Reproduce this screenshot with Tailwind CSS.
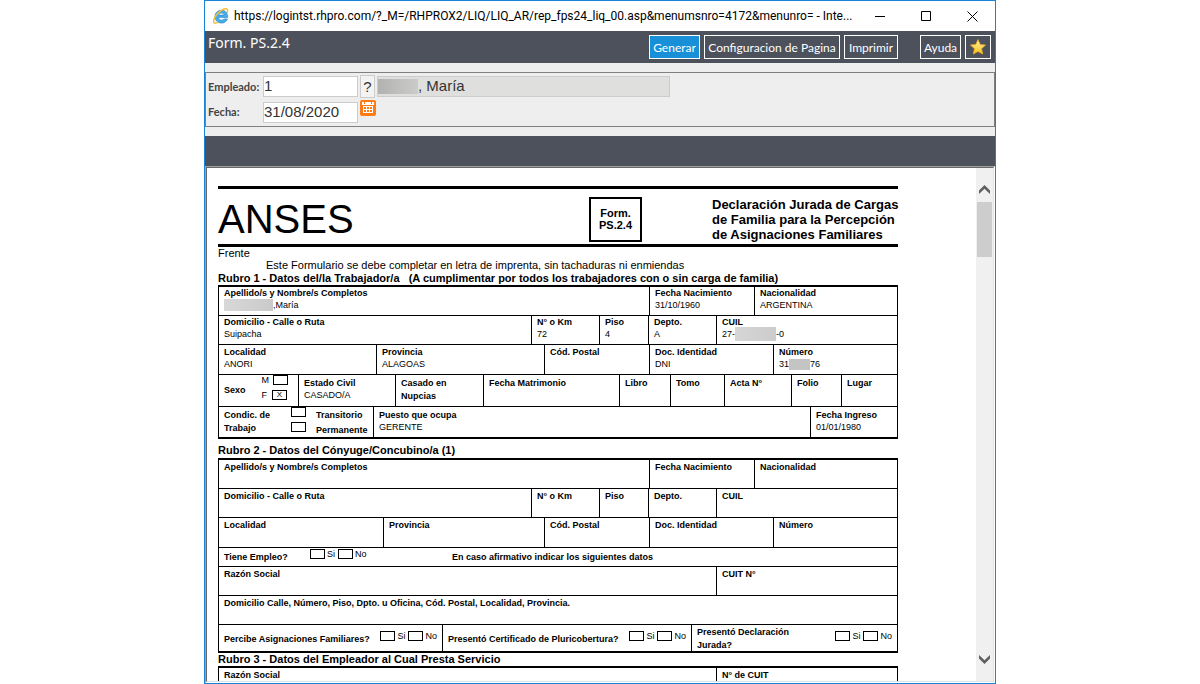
<!DOCTYPE html>
<html lang="es">
<head>
<meta charset="utf-8">
<meta name="viewport" content="width=device-width, initial-scale=1">
<title>Form. PS.2.4</title>
<script src="https://cdn.jsdelivr.net/npm/@tailwindcss/browser@4"></script>
</head>
<body class="bg-white">
<div class="mx-auto flex h-screen w-full max-w-[792px] flex-col overflow-hidden border border-[#1883d7] bg-white">

  <!-- Title bar -->
  <header class="flex h-[30px] shrink-0 items-center pl-2 font-['Roboto',sans-serif] text-xs text-black">
    <svg class="mr-[5px] size-4 shrink-0" viewBox="0 0 16 16" aria-hidden="true">
      <path d="M14.800 9.400H5.400c.2 1.600 1.500 2.600 3.200 2.600 1.100 0 2-.4 2.500-1.100h3.400c-.9 2.500-3.100 4.200-6 4.200C4.700 15.100 1.900 12.400 1.900 8.600c0-3.700 2.800-6.400 6.600-6.400 4 0 6.500 2.900 6.300 7.200zM5.600 7.100h5.500c-.2-1.300-1.200-2-2.700-2-1.500 0-2.500.7-2.800 2z" fill="#45aee8" stroke="#2a80c4" stroke-width=".6"/>
      <path d="M14.200 4.600c.7-1.900.5-3.200-.5-3.700C12 0 7.800 2.100 4.400 5.800 1 9.600-.3 13.400 1.100 14.700c.8.7 2.300.4 4.100-.6" fill="none" stroke="#f3c23a" stroke-width="1.600"/>
    </svg>
    <h1 class="min-w-0 flex-1 whitespace-nowrap">https://logintst.rhpro.com/?_M=/RHPROX2/LIQ/LIQ_AR/rep_fps24_liq_00.asp&amp;menumsnro=4172&amp;menunro= - Inte...</h1>
    <button type="button" aria-label="Minimizar" class="grid h-full w-[46px] shrink-0 place-items-center"><svg class="size-[11px]" viewBox="0 0 11 11"><path d="M0 5.500h10" stroke="#000"/></svg></button>
    <button type="button" aria-label="Maximizar" class="grid h-full w-[46px] shrink-0 place-items-center"><svg class="size-[11px]" viewBox="0 0 11 11"><path d="M.5.5h9v9h-9z" fill="none" stroke="#000"/></svg></button>
    <button type="button" aria-label="Cerrar" class="grid h-full w-[46px] shrink-0 place-items-center"><svg class="size-[11px]" viewBox="0 0 11 11"><path d="M.5.500l10 10m0-10l-10 10" stroke="#000"/></svg></button>
  </header>

  <!-- Toolbar -->
  <div class="flex h-8 shrink-0 items-start justify-between bg-[#4d515c] pl-[3px] pr-1 text-white">
    <h2 class="pt-[2px] font-['Noto_Sans',sans-serif] text-sm leading-5">Form. PS.2.4</h2>
    <div class="flex gap-1 pt-1 font-['Lato',sans-serif] text-xs">
      <button type="button" class="h-6 w-[51px] border border-white bg-[#1890d7] pt-px">Generar</button>
      <button type="button" class="h-6 w-[136px] border border-white pt-px">Configuracion de Pagina</button>
      <button type="button" class="mr-[18px] h-6 w-[54px] border border-white pt-px">Imprimir</button>
      <button type="button" class="h-6 w-[41px] border border-white pt-px">Ayuda</button>
      <button type="button" aria-label="Favoritos" class="grid h-6 w-[26px] place-items-center border border-white">
        <svg class="size-4" viewBox="0 0 16 16"><defs><linearGradient id="g" x1="0" y1="0" x2="0" y2="1"><stop offset="0" stop-color="#fff3a0"/><stop offset="1" stop-color="#f8c21c"/></linearGradient></defs><path d="M8 .6l2.200 4.900 5.300.6-4 3.600 1.200 5.300L8 12.400 3.300 15l1.200-5.300L.5 6.100l5.300-.6z" fill="url(#g)" stroke="#efae1c" stroke-width=".8" stroke-linejoin="round"/></svg>
      </button>
    </div>
  </div>

  <!-- Employee filter -->
  <form class="shrink-0 bg-[#eeeeee] py-[9px]">
    <div class="flex flex-col gap-[2px] border border-[#808080] px-[2px] pb-px pt-[2px] font-['Liberation_Sans',sans-serif] text-[15px] text-[#333]">
      <div class="flex h-[23px] items-center gap-[2px]">
        <label for="emp" class="w-[53px] pt-px font-['Lato',sans-serif] text-[11px] font-bold text-[#444]">Empleado:</label>
        <input id="emp" value="1" class="h-[21px] w-[95px] border border-[#ccc] bg-white">
        <button type="button" aria-label="Buscar empleado" class="h-[23px] w-[15px] border border-[#ccc] bg-[#f3f3f3] pb-px leading-none">?</button>
        <output for="emp" class="flex h-[21px] w-[293px] items-center border border-[#ccc] bg-[#dfdfdd]"><span class="h-[15px] w-10 bg-linear-to-r from-[#b2b2b0] to-[#cbcbc9]"></span>, María</output>
      </div>
      <div class="flex h-[25px] items-center gap-[2px]">
        <label for="fecha" class="w-[53px] font-['Lato',sans-serif] text-[11px] font-bold text-[#444]">Fecha:</label>
        <input id="fecha" value="31/08/2020" class="h-[21px] w-[95px] border border-[#ccc] bg-white">
        <button type="button" aria-label="Calendario" class="mb-[10px]"><svg class="size-4" viewBox="0 0 16 16"><rect width="16" height="16" rx="2" fill="#ff7b16"/><path d="M2 2h2v2h1V2h6v2h1V2h2v3H2zM2 5h12v9H2z" fill="#fff"/><path d="M2 5h12v1H2zM2 6h1v7H2zM13 6h1v7h-1zM2 13h12v1H2zM4 7h2v2H4zM7 7h2v2H7zM10 7h2v2h-2zM4 10h2v2H4zM7 10h2v2H7zM10 10h2v2h-2z" fill="#ff7b16"/></svg></button>
      </div>
    </div>
  </form>
  <div class="h-[30px] shrink-0 bg-[#4d515c]"></div>

  <!-- Report frame -->
  <div class="flex min-h-0 flex-1 border-b border-l border-r border-t border-b-white border-l-[#a0a0a0] border-r-white border-t-[#a0a0a0]">
    <div class="flex min-w-0 flex-1 border border-b-[#e3e3e3] border-l-[#696969] border-r-[#e3e3e3] border-t-[#696969]">
      <main class="min-w-0 flex-1 overflow-hidden pl-[11px] pt-[18px] font-['Liberation_Sans',sans-serif] text-[9px] leading-3 text-black">
        <div class="w-full max-w-[680px]">
          <div class="flex h-[61px] items-center border-y-[3px] border-black">
            <h3 class="flex-1 pt-1 text-[40px] leading-[48px]">ANSES</h3>
            <p class="mr-[70px] mt-[6px] flex h-[45px] w-[53px] items-center justify-center border-2 border-black pb-[2px] text-center text-[11px] font-bold leading-3">Form.<br>PS.2.4</p>
            <p class="w-[186px] whitespace-nowrap pt-[6px] text-[13px] font-bold leading-[15px]">Declaración Jurada de Cargas<br>de Familia para la Percepción<br>de Asignaciones Familiares</p>
          </div>
          <p class="text-[11px]">Frente</p>
          <p class="pl-12 text-[11px]">Este Formulario se debe completar en letra de imprenta, sin tachaduras ni enmiendas</p>
          <h4 class="text-[11px] font-bold leading-[14px]">Rubro 1 - Datos del/la Trabajador/a &nbsp; (A cumplimentar por todos los trabajadores con o sin carga de familia)</h4>

          <section class="border-x border-y-2 border-black">
            <div class="grid h-[29px] grid-cols-[431fr_105fr_142fr] divide-x divide-black border-b border-black *:pl-[5px]">
              <div><b class="block">Apellido/s y Nombre/s Completos</b><span class="flex items-center"><span class="h-3 w-[49px] bg-linear-to-r from-[#d8d8d8] to-[#cacaca]"></span>,María</span></div>
              <div><b class="block">Fecha Nacimiento</b>31/10/1960</div>
              <div><b class="block">Nacionalidad</b>ARGENTINA</div>
            </div>
            <div class="grid h-[29px] grid-cols-[313fr_68fr_49fr_68fr_180fr] divide-x divide-black border-b border-black *:pl-[5px]">
              <div><b class="block">Domicilio - Calle o Ruta</b>Suipacha</div>
              <div><b class="block">N° o Km</b>72</div>
              <div><b class="block">Piso</b>4</div>
              <div><b class="block">Depto.</b>A</div>
              <div><b class="block">CUIL</b><span class="flex items-center">27-<span class="-my-px h-[14px] w-[41px] bg-linear-to-r from-[#d6d6d6] to-[#cccccc]"></span>-0</span></div>
            </div>
            <div class="grid h-[30px] grid-cols-[158fr_168fr_105fr_124fr_123fr] divide-x divide-black border-b border-black *:pl-[5px] *:pt-px">
              <div><b class="block">Localidad</b>ANORI</div>
              <div><b class="block">Provincia</b>ALAGOAS</div>
              <div><b class="block">Cód. Postal</b></div>
              <div><b class="block">Doc. Identidad</b>DNI</div>
              <div><b class="block">Número</b><span class="flex items-center">31<span class="h-[11px] w-[21px] bg-[#c4c4c4]"></span>76</span></div>
            </div>
            <div class="grid h-8 grid-cols-[80fr_97fr_88fr_136fr_51fr_54fr_67fr_50fr_55fr] divide-x divide-black border-b border-black *:pl-[5px] *:pt-[2px]">
              <div class="flex items-center justify-between pr-[10px]"><b class="pb-1">Sexo</b>
                <div class="-mt-[2px] flex flex-col items-end gap-[5px] self-start">
                  <label class="flex h-[10px] items-center gap-1">M<input type="checkbox" class="h-[10px] w-[15px] appearance-none border border-black"></label>
                  <label class="mr-px flex h-[10px] items-center gap-[5px]">F<input type="checkbox" checked class="grid h-[10px] w-[15px] appearance-none place-items-center border border-black before:text-[8px] before:leading-[8px] before:content-['X']"></label>
                </div>
              </div>
              <div><b class="block">Estado Civil</b>CASADO/A</div>
              <div class="leading-[13px]"><b>Casado en<br>Nupcias</b></div>
              <div><b>Fecha Matrimonio</b></div>
              <div><b>Libro</b></div>
              <div><b>Tomo</b></div>
              <div><b>Acta N°</b></div>
              <div><b>Folio</b></div>
              <div><b>Lugar</b></div>
            </div>
            <div class="grid h-[30px] grid-cols-[155fr_437fr_86fr] divide-x divide-black *:pl-[5px] *:pt-[2px]">
              <div class="flex pr-[5px] font-bold">
                <p class="w-[67px] leading-[13px]">Condic. de<br>Trabajo</p>
                <div class="-mt-[2px] flex flex-1 flex-col gap-[5px]">
                  <label class="flex h-[10px] gap-[10px]"><input type="checkbox" class="h-[10px] w-[15px] appearance-none border border-black"><span class="pt-[2px]">Transitorio</span></label>
                  <label class="flex h-[10px] gap-[10px]"><input type="checkbox" class="h-[10px] w-[15px] appearance-none border border-black"><span class="pt-[2px]">Permanente</span></label>
                </div>
              </div>
              <div><b class="block">Puesto que ocupa</b>GERENTE</div>
              <div><b class="block">Fecha Ingreso</b>01/01/1980</div>
            </div>
          </section>

          <h4 class="pb-[2px] pt-[5px] text-[11px] font-bold">Rubro 2 - Datos del Cónyuge/Concubino/a (1)</h4>
          <section class="border-x border-y-2 border-black">
            <div class="grid h-[29px] grid-cols-[431fr_105fr_142fr] divide-x divide-black border-b border-black *:pl-[5px] *:pt-px">
              <b>Apellido/s y Nombre/s Completos</b><b>Fecha Nacimiento</b><b>Nacionalidad</b>
            </div>
            <div class="grid h-[29px] grid-cols-[313fr_68fr_49fr_68fr_180fr] divide-x divide-black border-b border-black *:pl-[5px] *:pt-px">
              <b>Domicilio - Calle o Ruta</b><b>N° o Km</b><b>Piso</b><b>Depto.</b><b>CUIL</b>
            </div>
            <div class="grid h-[30px] grid-cols-[165fr_161fr_105fr_124fr_123fr] divide-x divide-black border-b border-black *:pl-[5px] *:pt-px">
              <b>Localidad</b><b>Provincia</b><b>Cód. Postal</b><b>Doc. Identidad</b><b>Número</b>
            </div>
            <div class="flex h-[19px] border-b border-black pl-[5px]">
              <b class="w-[86px] pt-[3px]">Tiene Empleo?</b>
              <div class="flex w-[142px] gap-[3px] pt-px">
                <label class="flex h-[10px] items-center gap-[2px]"><input type="checkbox" class="h-[10px] w-[15px] appearance-none border border-black">Si</label>
                <label class="flex h-[10px] items-center gap-[2px]"><input type="checkbox" class="h-[10px] w-[15px] appearance-none border border-black">No</label>
              </div>
              <b class="pt-[3px]">En caso afirmativo indicar los siguientes datos</b>
            </div>
            <div class="grid h-[29px] grid-cols-[498fr_180fr] divide-x divide-black border-b border-black *:pl-[5px] *:pt-px">
              <b>Razón Social</b><b>CUIT N°</b>
            </div>
            <div class="h-[29px] border-b border-black pl-[5px] pt-px"><b>Domicilio Calle, Número, Piso, Dpto. u Oficina, Cód. Postal, Localidad, Provincia.</b></div>
            <div class="grid h-[26px] grid-cols-[224fr_249fr_205fr] divide-x divide-black *:flex *:justify-between *:pl-[5px] *:pr-[5px]">
              <div><b class="pt-2">Percibe Asignaciones Familiares?</b>
                <div class="flex gap-[3px] pt-[6px]">
                  <label class="flex h-[10px] items-center gap-[2px]"><input type="checkbox" class="h-[10px] w-[15px] appearance-none border border-black">Si</label>
                  <label class="flex h-[10px] items-center gap-[2px]"><input type="checkbox" class="h-[10px] w-[15px] appearance-none border border-black">No</label>
                </div>
              </div>
              <div><b class="pt-2">Presentó Certificado de Pluricobertura?</b>
                <div class="flex gap-[3px] pt-[6px]">
                  <label class="flex h-[10px] items-center gap-[2px]"><input type="checkbox" class="h-[10px] w-[15px] appearance-none border border-black">Si</label>
                  <label class="flex h-[10px] items-center gap-[2px]"><input type="checkbox" class="h-[10px] w-[15px] appearance-none border border-black">No</label>
                </div>
              </div>
              <div><b class="pt-px leading-[13px]">Presentó Declaración<br>Jurada?</b>
                <div class="flex gap-[3px] pt-[6px]">
                  <label class="flex h-[10px] items-center gap-[2px]"><input type="checkbox" class="h-[10px] w-[15px] appearance-none border border-black">Si</label>
                  <label class="flex h-[10px] items-center gap-[2px]"><input type="checkbox" class="h-[10px] w-[15px] appearance-none border border-black">No</label>
                </div>
              </div>
            </div>
          </section>

          <h4 class="text-[11px] font-bold leading-[13px]">Rubro 3 - Datos del Empleador al Cual Presta Servicio</h4>
          <section class="border-x border-y-2 border-black">
            <div class="grid h-[29px] grid-cols-[498fr_180fr] divide-x divide-black *:pl-[5px] *:pt-px">
              <b>Razón Social</b><b>N° de CUIT</b>
            </div>
          </section>
        </div>
      </main>

      <!-- Scroll bar -->
      <div class="flex w-[17px] shrink-0 flex-col items-center bg-[#f0f0f0] pb-[17px] pt-[17px]">
        <button type="button" aria-label="Subir"><svg class="h-[9px] w-[11px]" viewBox="0 0 11 9"><path d="M0 9V5.500L5.500 0 11 5.500V9L5.500 3.700z" fill="#606060"/></svg></button>
        <div class="mt-2 h-[55px] w-[15px] bg-[#cdcdcd]"></div>
        <button type="button" aria-label="Bajar" class="mt-auto"><svg class="h-[9px] w-[11px]" viewBox="0 0 11 9"><path d="M0 0v3.500L5.500 9 11 3.500V0L5.500 5.300z" fill="#606060"/></svg></button>
      </div>
    </div>
  </div>
</div>
</body>
</html>
